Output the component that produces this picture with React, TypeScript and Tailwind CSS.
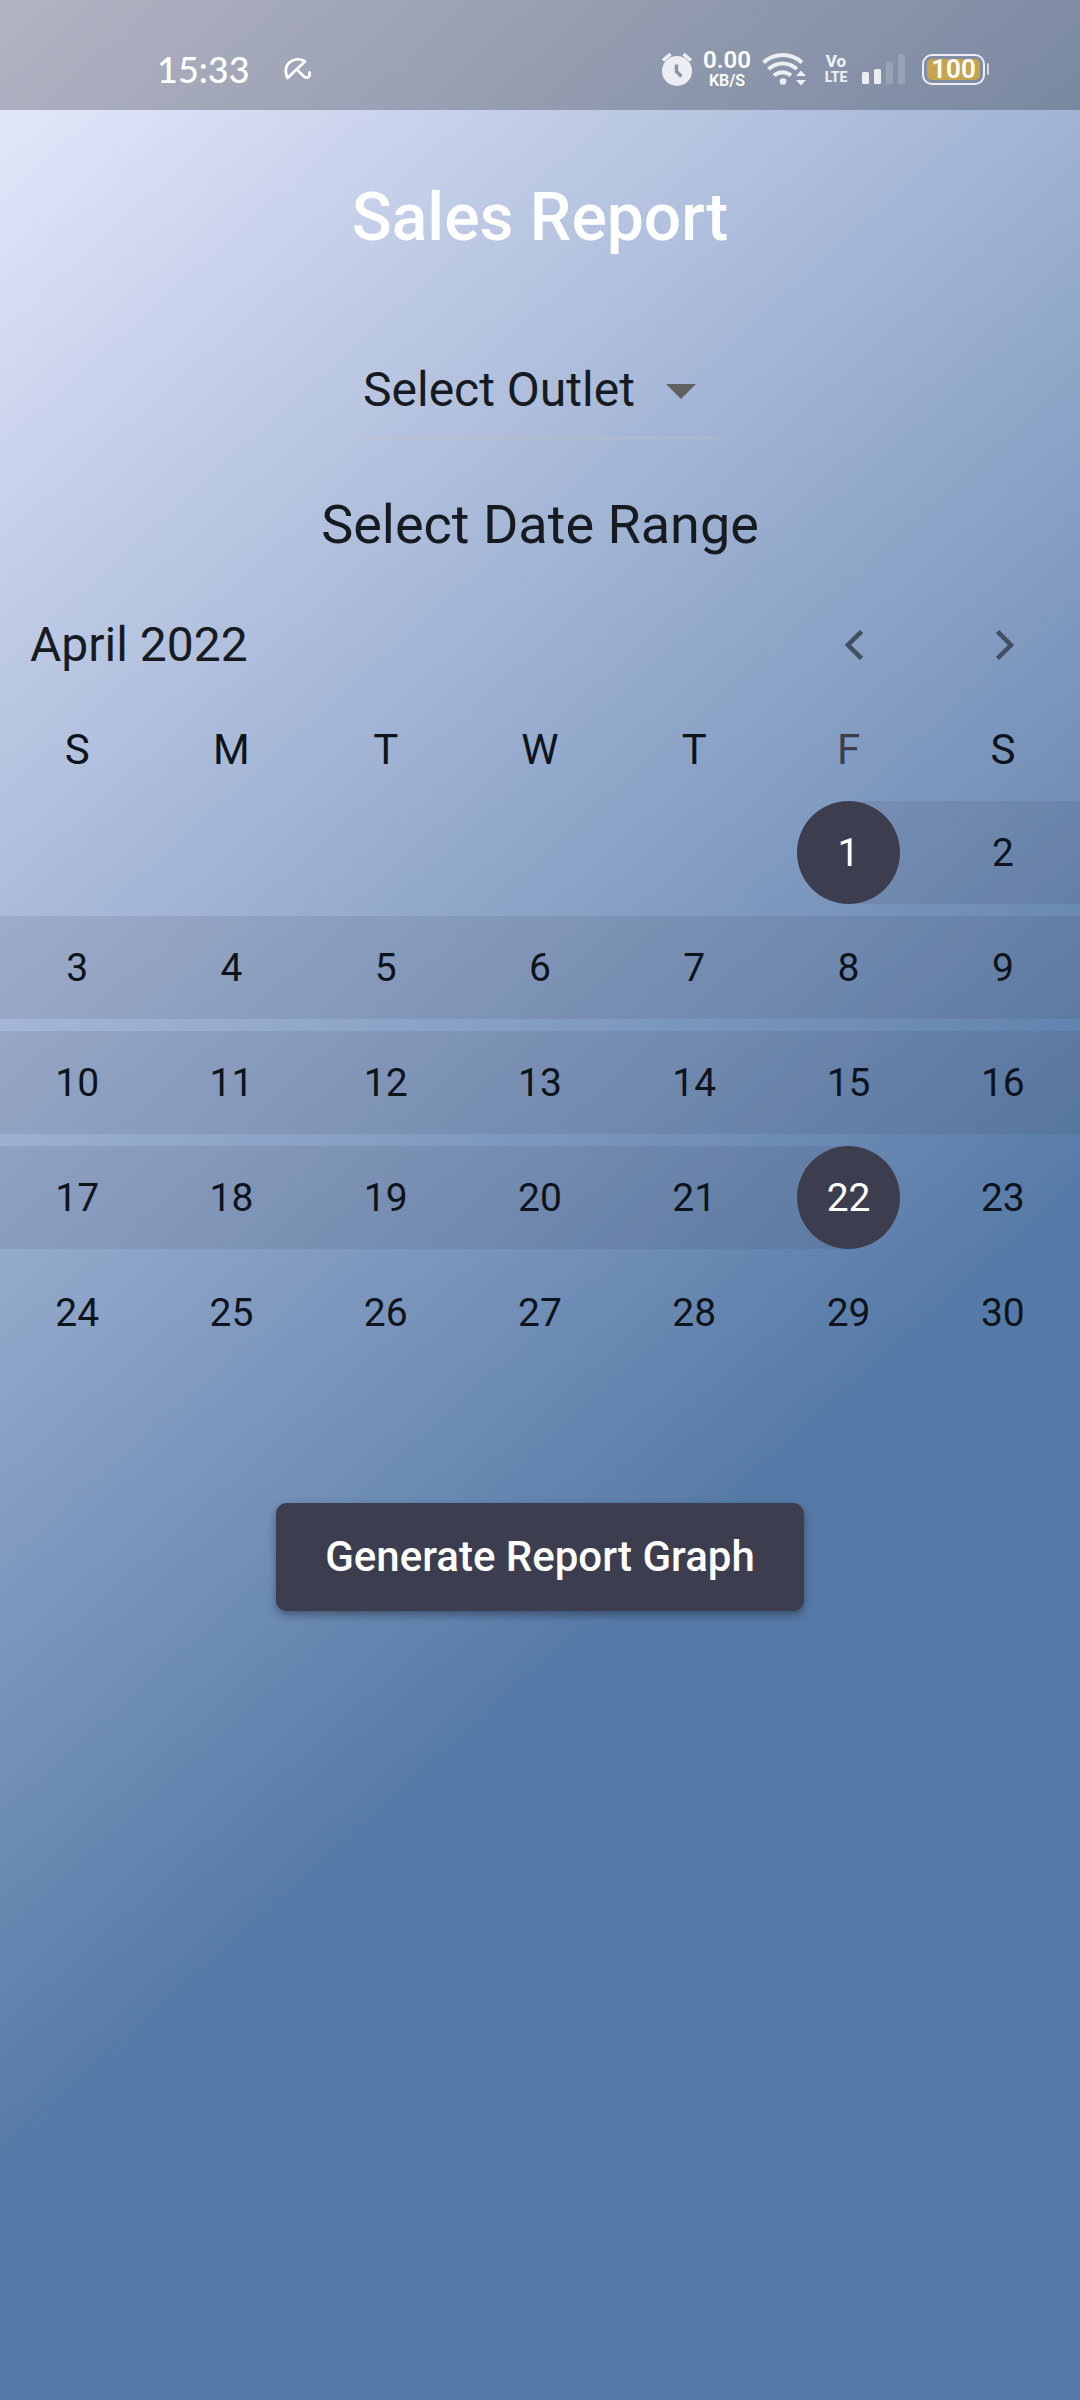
import { useState } from "react";

const WEEKDAYS = ["S", "M", "T", "W", "T", "F", "S"];
const FIRST_WEEKDAY = 5;
const DAYS_IN_MONTH = 30;
const RANGE_START = 1;
const RANGE_END = 22;

const weeks = Array.from({ length: 5 }, (_, w) =>
  Array.from({ length: 7 }, (_, d) => {
    const day = w * 7 + d - FIRST_WEEKDAY + 1;
    return day >= 1 && day <= DAYS_IN_MONTH ? day : null;
  })
);

function UmbrellaIcon() {
  return (
    <svg viewBox="0 0 28 24" className="h-6 w-7" fill="none" stroke="white" strokeWidth="2.8" strokeLinecap="round" strokeLinejoin="round">
      <path d="M3.500 21C.5 15 1.500 8.500 6 5 10.500 1.500 16.500 1.500 21 4.500L13 12 3.500 21Z" />
      <path d="m13 12.500 7 7c3 2.500 6.500.5 5.500-4" />
    </svg>
  );
}

function AlarmIcon() {
  return (
    <svg viewBox="0 0 32 34" className="h-[34px] w-8">
      <circle cx="16" cy="19" r="15" fill="#eceef3" />
      <path d="M2 8.500 9.500 2M30 8.500 22.500 2" stroke="#eceef3" strokeWidth="3.600" />
      <path d="M15.500 12.500v7l5 5" fill="none" stroke="#8a93a6" strokeWidth="3.400" />
    </svg>
  );
}

function WifiIcon() {
  return (
    <svg viewBox="0 0 46 34" className="h-[34px] w-[46px]">
      <g fill="none" stroke="#eceef3" strokeWidth="4">
        <path d="M1.500 10.500c11-10 27.500-10 38.500 0" />
        <path d="M6.500 17c8.500-7.500 20-7.500 28.500 0" />
        <path d="M12 23.500c5-4.500 12-4.500 17 0" />
      </g>
      <circle cx="21" cy="29.500" r="3.300" fill="#eceef3" />
      <path d="m34 24 5-5.500 5 5.500ZM34 28h10l-5 5.500Z" fill="#eceef3" />
    </svg>
  );
}

function SignalIcon() {
  return (
    <svg viewBox="0 0 44 30" className="h-[30px] w-11" fill="#eceef3">
      <rect x="0" y="18" width="7" height="12" rx="1.500" />
      <rect x="12" y="15" width="7" height="15" rx="1.500" />
      <rect x="24" y="8" width="7" height="22" rx="1.500" opacity=".2" />
      <rect x="36" y="0" width="7" height="30" rx="1.500" opacity=".2" />
    </svg>
  );
}

function StatusBar() {
  return (
    <div className="flex h-[110px] items-center justify-between bg-black/24 pt-7 pr-[91px] pl-[157px] text-white">
      <div className="flex items-center gap-[34px]">
        <span className="font-[Lato,sans-serif] text-[36px] leading-10 font-medium">15:33</span>
        <UmbrellaIcon />
      </div>
      <div className="flex items-center">
        <AlarmIcon />
        <div className="ml-2 flex w-[52px] flex-col items-center font-semibold">
          <span className="text-[24px] leading-[24px]">0.00</span>
          <span className="text-[16px] leading-[18px]">KB/S</span>
        </div>
        <div className="ml-[9px]">
          <WifiIcon />
        </div>
        <div className="ml-4 flex w-6 flex-col items-center leading-[16px] font-extrabold text-[#eceef3]">
          <span className="text-[17px]">Vo</span>
          <span className="text-[14px]">LTE</span>
        </div>
        <div className="ml-[14px]">
          <SignalIcon />
        </div>
        <div className="ml-4 flex items-center gap-[2px]">
          <div className="flex h-[31px] w-[63px] rounded-[10px] border-2 border-[#eceef3] p-[3px]">
            <span className="flex flex-1 items-center justify-center rounded-[5px] bg-[#c4a54e] text-[26px] leading-5 font-semibold">
              100
            </span>
          </div>
          <div className="h-3 w-[2px] rounded-r bg-[#eceef3]/80" />
        </div>
      </div>
    </div>
  );
}

function OutletSelect() {
  return (
    <div className="relative w-[354px] border-b-2 border-[#bdbdbd]/50">
      <select
        aria-label="Select Outlet"
        className="block h-[94px] w-full appearance-none bg-transparent text-[48px] leading-[64px] outline-none"
      >
        <option>Select Outlet</option>
      </select>
      <svg viewBox="0 0 30 15" className="pointer-events-none absolute top-[41px] right-[21px] h-[15px] w-[30px]" fill="#616161">
        <path d="M0 0h30L15 15Z" />
      </svg>
    </div>
  );
}

function Chevron({ d }: { d: string }) {
  return (
    <svg viewBox="0 0 18 30" className="h-[30px] w-[18px]" fill="none" stroke="#434f61" strokeWidth="4.500">
      <path d={d} />
    </svg>
  );
}

interface DayCellProps {
  day: number | null;
  start: number;
  end: number;
  onPick: (day: number) => void;
}

function DayCell({ day, start, end, onPick }: DayCellProps) {
  if (day === null) return <td className="h-[103px] p-0" />;

  let band = "";
  if (day === start) band = "bg-[linear-gradient(to_right,transparent_50%,#3c3e5520_50%)]";
  else if (day === end) band = "bg-[linear-gradient(to_right,#3c3e5520_50%,transparent_50%)]";
  else if (day > start && day < end) band = "bg-[#3c3e5520]";

  const picked = day === start || day === end;

  return (
    <td className={`h-[103px] p-0 ${band}`}>
      <button
        onClick={() => onPick(day)}
        className={`mx-auto flex size-[103px] items-center justify-center rounded-full pt-[2px] text-[39px] leading-none ${
          picked ? "bg-[#3c3e4f] text-white" : ""
        }`}
      >
        {day}
      </button>
    </td>
  );
}

export default function App() {
  const [range, setRange] = useState({ start: RANGE_START, end: RANGE_END });

  const handlePick = (day: number) => {
    setRange(r => (day < r.start ? { ...r, start: day } : { ...r, end: day }));
  };

  return (
    <div className="min-h-screen bg-[linear-gradient(138deg,#eaecff_0%,#567aa7_64.4%)] font-[Roboto,sans-serif] text-[#161b22]">
      <StatusBar />

      <main className="flex flex-col items-center">
        <h1 className="mt-[68px] text-[66px] leading-[80px] font-medium text-white">Sales Report</h1>

        <div className="mt-[85px]">
          <OutletSelect />
        </div>

        <h2 className="mt-[54px] text-[54px] leading-[64px]">Select Date Range</h2>

        {/* Calendar */}
        <section className="mt-[56px] w-full">
          <div className="flex h-16 items-center justify-between pr-[66px] pl-[30px]">
            <h3 className="text-[48px] leading-[64px]">April 2022</h3>
            <div className="flex gap-[133px]">
              <button aria-label="Previous month">
                <Chevron d="M16.500 1.500 3 15l13.500 13.500" />
              </button>
              <button aria-label="Next month">
                <Chevron d="M1.500 1.500 15 15 1.500 28.500" />
              </button>
            </div>
          </div>

          <table className="mt-7 w-full table-fixed border-separate border-spacing-x-0 border-spacing-y-3 text-center text-[#0e141c]">
            <thead>
              <tr>
                {WEEKDAYS.map((name, i) => (
                  <th
                    key={i}
                    className={`h-[72px] p-0 pb-[6px] text-[42px] leading-none font-normal ${i === FIRST_WEEKDAY ? "text-[#3c3e4f]" : ""}`}
                  >
                    {name}
                  </th>
                ))}
              </tr>
            </thead>
            <tbody>
              {weeks.map((week, w) => (
                <tr key={w}>
                  {week.map((day, d) => (
                    <DayCell key={d} day={day} start={range.start} end={range.end} onPick={handlePick} />
                  ))}
                </tr>
              ))}
            </tbody>
          </table>
        </section>

        <button className="mt-[127px] h-[108px] rounded-[11px] bg-[#3c3e4f] px-[49px] text-[42px] leading-none font-medium text-white shadow-[0_4px_8px_rgba(0,0,0,0.35)]">
          Generate Report Graph
        </button>
      </main>
    </div>
  );
}
